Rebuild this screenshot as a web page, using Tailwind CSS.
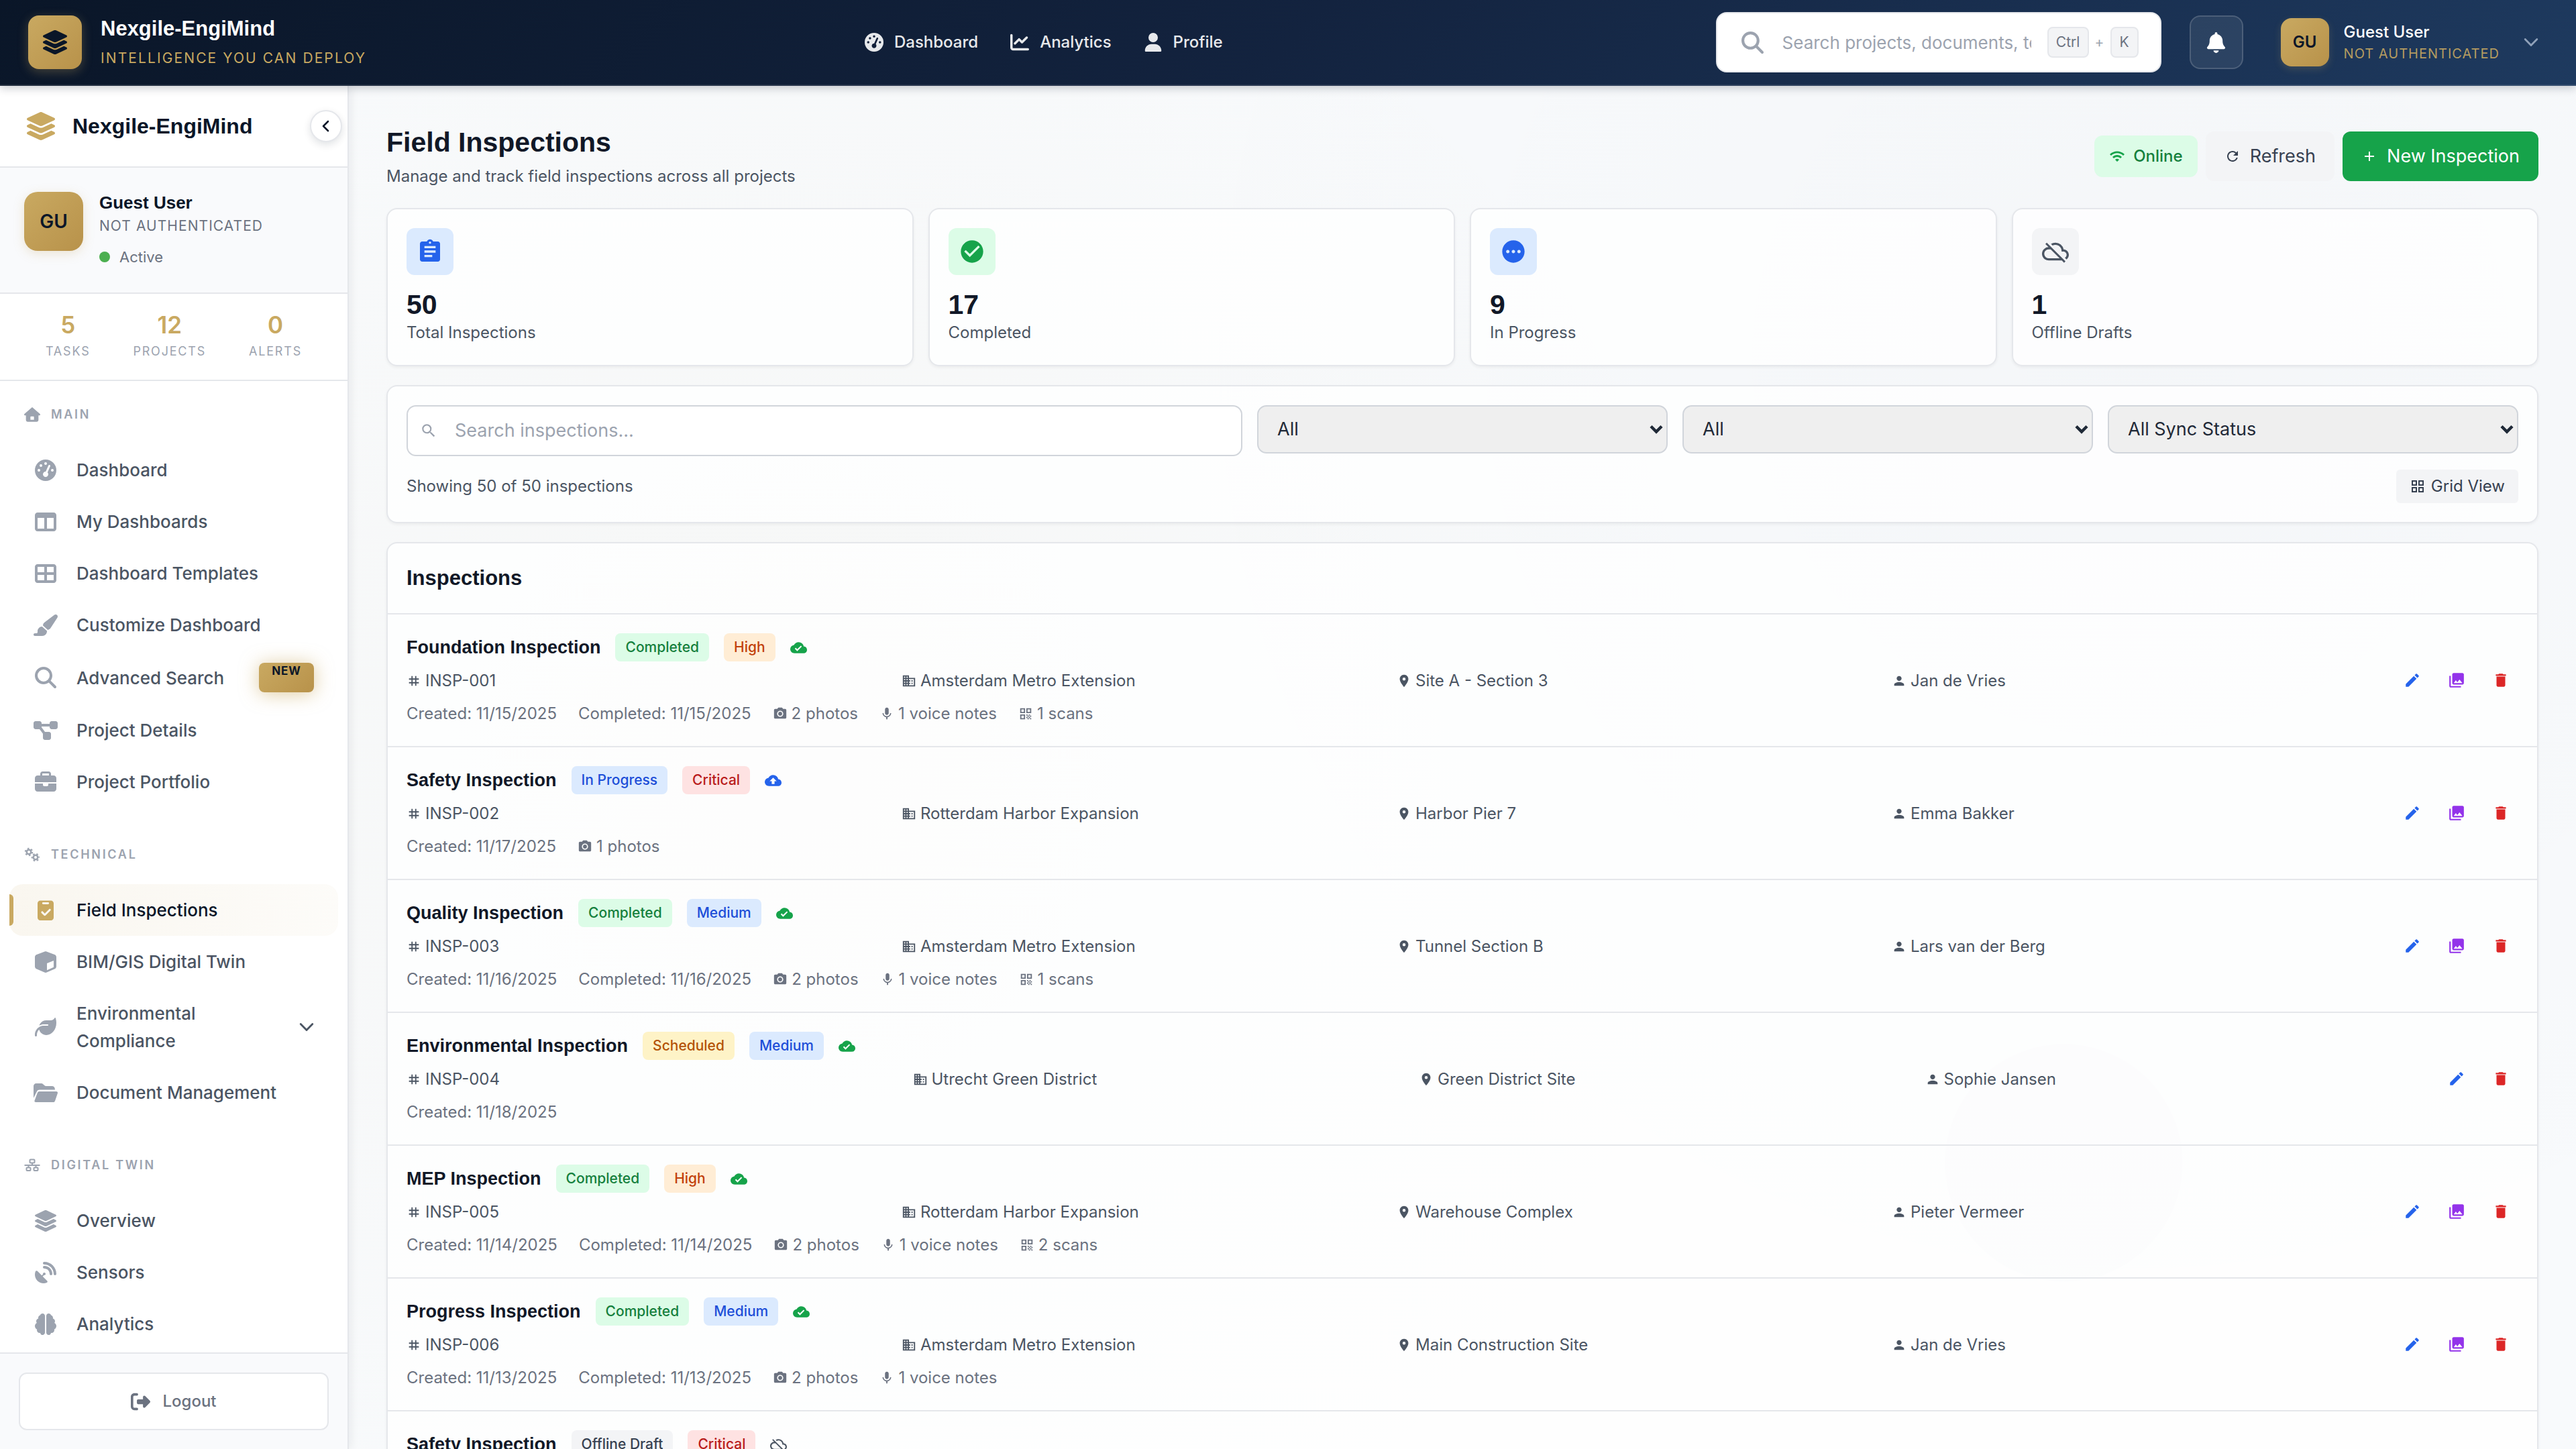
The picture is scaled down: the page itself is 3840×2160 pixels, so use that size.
<!DOCTYPE html>
<html lang="en">
<head>
<meta charset="utf-8">
<title>Nexgile-EngiMind – Field Inspections</title>
<script src="https://cdn.jsdelivr.net/npm/@tailwindcss/browser@4"></script>
</head>
<body class="flex h-screen flex-col overflow-hidden bg-[#f8fafc] font-[Inter,sans-serif] text-[24px] text-[#4b5563]">

<!-- Icon sprite -->
<svg class="hidden" aria-hidden="true">
  <symbol id="layers" viewBox="32 0 512 512"><path d="M264.500 5.200c14.900-6.900 32.100-6.900 47 0l218.600 101c8.500 3.900 13.900 12.400 13.900 21.800s-5.400 17.900-13.900 21.800l-218.600 101c-14.900 6.900-32.100 6.900-47 0L45.900 149.800C37.400 145.800 32 137.300 32 128s5.400-17.900 13.900-21.800L264.500 5.200zM476.900 209.600l53.200 24.600c8.500 3.900 13.900 12.400 13.900 21.800s-5.400 17.900-13.900 21.800l-218.600 101c-14.900 6.900-32.100 6.900-47 0L45.900 277.800C37.400 273.800 32 265.300 32 256s5.400-17.900 13.900-21.800l53.200-24.600 152 70.200c23.400 10.800 50.400 10.800 73.800 0l152-70.200zm-152 198.200l152-70.200 53.200 24.600c8.500 3.900 13.900 12.400 13.900 21.800s-5.400 17.900-13.900 21.800l-218.600 101c-14.900 6.900-32.100 6.900-47 0L45.900 405.800C37.400 401.800 32 393.300 32 384s5.400-17.900 13.900-21.800l53.200-24.600 152 70.200c23.400 10.800 50.400 10.800 73.800 0z"/></symbol>
  <symbol id="gauge" viewBox="0 0 512 512"><path fill-rule="evenodd" d="M0 256a256 256 0 1 1 512 0A256 256 0 1 1 0 256zM288 96a32 32 0 1 0-64 0 32 32 0 1 0 64 0zM256 416c35.300 0 64-28.700 64-64 0-17.400-6.900-33.100-18.100-44.600L366 161.700c5.300-12.100-.2-26.300-12.300-31.600s-26.300 .2-31.600 12.300L257.900 288H256c-35.300 0-64 28.700-64 64s28.700 64 64 64zM176 144a32 32 0 1 0-64 0 32 32 0 1 0 64 0zM96 288a32 32 0 1 0 0-64 32 32 0 1 0 0 64zm352-32a32 32 0 1 0-64 0 32 32 0 1 0 64 0z"/></symbol>
  <symbol id="chart" viewBox="0 0 512 512"><path d="M64 64c0-17.700-14.300-32-32-32S0 46.300 0 64V400c0 44.200 35.800 80 80 80H480c17.700 0 32-14.300 32-32s-14.300-32-32-32H80c-8.800 0-16-7.200-16-16V64zm406.600 86.600c12.500-12.500 12.500-32.800 0-45.300s-32.800-12.500-45.300 0L320 210.700l-57.400-57.400c-12.500-12.500-32.800-12.500-45.300 0l-112 112c-12.500 12.500-12.500 32.800 0 45.300s32.800 12.500 45.300 0L240 221.300l57.400 57.400c12.500 12.500 32.800 12.500 45.300 0l128-128z"/></symbol>
  <symbol id="user" viewBox="0 0 448 512"><path d="M224 256A128 128 0 1 0 224 0a128 128 0 1 0 0 256zm-45.700 48C79.800 304 0 383.800 0 482.300C0 498.700 13.300 512 29.700 512H418.300c16.400 0 29.700-13.300 29.700-29.700C448 383.800 368.200 304 269.700 304H178.300z"/></symbol>
  <symbol id="search" viewBox="0 0 512 512"><path d="M416 208c0 45.900-14.900 88.300-40 122.700L502.600 457.400c12.500 12.500 12.500 32.800 0 45.300s-32.800 12.500-45.300 0L330.700 376c-34.400 25.200-76.800 40-122.700 40C93.100 416 0 322.900 0 208S93.100 0 208 0S416 93.100 416 208zM208 352a144 144 0 1 0 0-288 144 144 0 1 0 0 288z"/></symbol>
  <symbol id="bell" viewBox="0 0 448 512"><path d="M224 0c-17.700 0-32 14.300-32 32V51.200C119 66 64 130.600 64 208v18.800c0 47-17.300 92.400-48.500 127.600l-7.400 8.300c-8.400 9.400-10.400 22.900-5.300 34.400S19.400 416 32 416H416c12.600 0 24-7.400 29.200-18.900s3.100-25-5.300-34.400l-7.400-8.300C401.300 319.200 384 273.900 384 226.800V208c0-77.400-55-142-128-156.800V32c0-17.700-14.300-32-32-32zm45.300 493.300c12-12 18.700-28.300 18.700-45.300H160c0 17 6.700 33.300 18.700 45.300s28.300 18.700 45.300 18.700s33.300-6.700 45.300-18.700z"/></symbol>
  <symbol id="chev-down" viewBox="0 0 20 20"><path d="M2 6l8 8 8-8" fill="none" stroke="currentColor" stroke-width="2.600" stroke-linecap="round" stroke-linejoin="round"/></symbol>
  <symbol id="chev-left" viewBox="0 0 20 20"><path d="M13 3l-7 7 7 7" fill="none" stroke="currentColor" stroke-width="2.600" stroke-linecap="round" stroke-linejoin="round"/></symbol>
  <symbol id="select-arrow" viewBox="0 0 20 20"><path d="M2 5.500l8 8 8-8" fill="none" stroke="currentColor" stroke-width="4.500"/></symbol>
  <symbol id="home" viewBox="0 0 576 512"><path fill-rule="evenodd" d="M575.800 255.500c0 18-15 32.100-32 32.100h-32l.7 160.200c0 35.300-28.700 64-64 64H128c-35.300 0-64-28.700-64-64V287.600H32c-18 0-32-14-32-32.100c0-9 3-17 10-24L266.400 8c7-7 15-8 22-8s15 2 21 7L564.800 231.500c8 7 12 15 11 24zM248 320c-13 0-24 11-24 24v96h128v-96c0-13-11-24-24-24z"/></symbol>
  <symbol id="columns" viewBox="0 0 512 512"><path d="M0 96C0 60.700 28.700 32 64 32H448c35.300 0 64 28.700 64 64V416c0 35.300-28.700 64-64 64H64c-35.300 0-64-28.700-64-64V96zm64 64V416H224V160H64zm384 0H288V416H448V160z"/></symbol>
  <symbol id="cells" viewBox="0 0 512 512"><path d="M448 96V224H288V96H448zm0 192V416H288V288H448zM224 224H64V96H224V224zM64 288H224V416H64V288zM64 32C28.700 32 0 60.700 0 96V416c0 35.300 28.700 64 64 64H448c35.300 0 64-28.700 64-64V96c0-35.300-28.700-64-64-64H64z"/></symbol>
  <symbol id="brush" viewBox="0 0 576 512"><path d="M339.300 367.100c27.300-3.900 51.900-19.400 67.200-42.900L568.200 74.100c12.600-19.500 9.400-45.300-7.600-61.200S517.700-4.400 499.100 9.600L262.400 187.200c-24 18-38.200 46.100-38.400 76.100L339.300 367.100zm-19.600 25.400l-116-104.400C143.900 290.300 96 339.600 96 400c0 3.900 .2 7.800 .6 11.600C98.400 429.100 86.400 448 68.800 448H32c-17.700 0-32 14.300-32 32s14.300 32 32 32H208c61.900 0 112-50.100 112-112c0-2.500-.1-5-.2-7.500z"/></symbol>
  <symbol id="project" viewBox="0 0 576 512"><path d="M0 80C0 53.500 21.500 32 48 32h96c26.500 0 48 21.500 48 48V96H384V80c0-26.500 21.500-48 48-48h96c26.500 0 48 21.500 48 48v96c0 26.500-21.500 48-48 48H432c-26.500 0-48-21.500-48-48V160H192v16c0 1.700-.1 3.400-.3 5L272 288h96c26.500 0 48 21.500 48 48v96c0 26.500-21.500 48-48 48H272c-26.500 0-48-21.500-48-48V336c0-1.700 .1-3.400 .3-5L144 224H48c-26.500 0-48-21.500-48-48V80z"/></symbol>
  <symbol id="briefcase" viewBox="0 0 512 512"><path d="M184 48H328c4.400 0 8 3.600 8 8V96H176V56c0-4.400 3.600-8 8-8zm-56 8V96H64C28.700 96 0 124.700 0 160v96H512V160c0-35.300-28.700-64-64-64H384V56c0-30.900-25.100-56-56-56H184c-30.900 0-56 25.100-56 56zM512 288H320v32c0 17.700-14.300 32-32 32H224c-17.700 0-32-14.300-32-32V288H0V416c0 35.300 28.700 64 64 64H448c35.300 0 64-28.700 64-64V288z"/></symbol>
  <symbol id="gears" viewBox="0 0 48 40"><g fill="none" stroke="currentColor"><circle cx="14" cy="12" r="6.500" stroke-width="5"/><circle cx="14" cy="12" r="10.500" stroke-width="4" stroke-dasharray="5 5.996" /><circle cx="34" cy="28" r="6.500" stroke-width="5"/><circle cx="34" cy="28" r="10.500" stroke-width="4" stroke-dasharray="5 5.996" stroke-dashoffset="4"/></g></symbol>
  <symbol id="clipboard" viewBox="0 0 384 512"><path fill-rule="evenodd" d="M64 24h256c35 0 64 29 64 64v344c0 35-29 64-64 64H64c-35 0-64-29-64-64V88c0-35 29-64 64-64zm68 40c-13 0-22 10-22 23s9 23 22 23h120c13 0 22-10 22-23s-9-23-22-23zM276 226L172 330l-46-46c-22-22-54 12-34 34l62 62c10 10 26 10 36 0l120-120c22-22-12-56-34-34z"/></symbol>
  <symbol id="cube" viewBox="0 0 512 512"><path fill-rule="evenodd" d="M234 8c14-6 30-6 44 0l192 72c25 9 42 33 42 60v224c0 24-14 46-35 57L283 505c-17 9-37 9-54 0L35 421C14 410 0 388 0 364V140c0-27 17-51 42-60zM288 286v164l160-72V222z"/></symbol>
  <symbol id="leaf" viewBox="0 0 512 512"><path d="M272 96c-78.600 0-145.100 51.500-167.700 122.500c33.600-17 71.500-26.500 111.700-26.500h88c8.800 0 16 7.200 16 16s-7.200 16-16 16H216c-16.600 0-32.700 1.900-48.200 5.400c-25.900 5.900-50 16.400-71.400 30.700C38.300 298.800 0 364.900 0 440v16c0 13.300 10.700 24 24 24s24-10.700 24-24V440c0-48.700 20.700-92.500 53.800-123.200C121.600 392.300 190.300 448 272 448l1 0c132.100-.7 239-130.900 239-291.400c0-42.600-7.500-83.100-21.100-119.600c-2.600-6.900-12.700-6.600-16.200-.1C455.900 72.100 418.700 96 376 96L272 96z"/></symbol>
  <symbol id="folder" viewBox="0 0 576 512"><path d="M0 96c0-35 29-64 64-64h120c17 0 33 7 45 19l27 26c12 12 28 19 45 19h135c45 0 74 29 74 74v14H144c-25 0-52 13-64 38L0 380z"/><path d="M470 480H52c-22 0-36-18-28-38l68-184c8-20 26-34 48-34h404c22 0 38 20 30 42l-58 172c-8 26-24 42-46 42z"/></symbol>
  <symbol id="network" viewBox="0 0 48 40"><g fill="none" stroke="currentColor" stroke-width="4"><rect x="17" y="3" width="14" height="10" rx="2"/><rect x="7" y="27" width="12" height="9" rx="2"/><rect x="29" y="27" width="12" height="9" rx="2"/><path d="M1 20h46M24 13v7M13 20v7M35 20v7"/></g></symbol>
  <symbol id="dish" viewBox="0 0 512 512"><path d="M192 32c0-17.700 14.300-32 32-32C383.100 0 512 128.900 512 288c0 17.700-14.300 32-32 32s-32-14.300-32-32C448 164.300 347.700 64 224 64c-17.700 0-32-14.300-32-32zM60.600 220.600L164.700 324.700l28.400-28.400c-.7-2.600-1.100-5.400-1.100-8.300c0-17.700 14.300-32 32-32s32 14.300 32 32s-14.300 32-32 32c-2.900 0-5.600-.4-8.300-1.100l-28.400 28.400L291.400 451.400c14.500 14.500 11.800 38.800-7.300 46.300C260.500 506.900 234.900 512 208 512C93.100 512 0 418.900 0 304c0-26.900 5.100-52.500 14.400-76.100c7.500-19 31.800-21.800 46.300-7.300zM224 96c106 0 192 86 192 192c0 17.700-14.300 32-32 32s-32-14.300-32-32c0-70.700-57.300-128-128-128c-17.700 0-32-14.300-32-32s14.300-32 32-32z"/></symbol>
  <symbol id="brain" viewBox="0 0 512 512"><path d="M184 0c31 0 56 25 56 56v400c0 31-25 56-56 56-29 0-53-22-56-50-5 1-10 2-16 2-35 0-64-29-64-64 0-7 1-15 4-21C21 367 0 336 0 300c0-33 19-62 47-76-9-11-15-26-15-42 0-31 22-57 51-63-2-5-3-11-3-17 0-30 21-55 48-62 3-23 27-40 56-40z"/><path transform="matrix(-1 0 0 1 512 0)" d="M184 0c31 0 56 25 56 56v400c0 31-25 56-56 56-29 0-53-22-56-50-5 1-10 2-16 2-35 0-64-29-64-64 0-7 1-15 4-21C21 367 0 336 0 300c0-33 19-62 47-76-9-11-15-26-15-42 0-31 22-57 51-63-2-5-3-11-3-17 0-30 21-55 48-62 3-23 27-40 56-40z"/></symbol>
  <symbol id="logout" viewBox="0 0 512 512"><path d="M377.900 105.900L500.700 228.700c7.200 7.200 11.300 17.100 11.300 27.300s-4.100 20.100-11.300 27.300L377.900 406.100c-6.400 6.400-15 9.900-24 9.900c-18.700 0-33.900-15.200-33.900-33.900l0-62.100-128 0c-17.700 0-32-14.300-32-32l0-64c0-17.700 14.300-32 32-32l128 0 0-62.100c0-18.700 15.200-33.900 33.900-33.900c9 0 17.600 3.600 24 9.900zM160 96L96 96c-17.700 0-32 14.300-32 32l0 256c0 17.700 14.300 32 32 32l64 0c17.700 0 32 14.300 32 32s-14.300 32-32 32l-64 0c-53 0-96-43-96-96L0 128C0 75 43 32 96 32l64 0c17.700 0 32 14.300 32 32s-14.300 32-32 32z"/></symbol>
  <symbol id="assignment" viewBox="0 0 24 24"><path d="M19 3h-4.180C14.400 1.840 13.300 1 12 1c-1.300 0-2.400.84-2.820 2H5c-1.100 0-2 .9-2 2v14c0 1.100.9 2 2 2h14c1.100 0 2-.9 2-2V5c0-1.100-.9-2-2-2zm-7 0c.55 0 1 .45 1 1s-.45 1-1 1-1-.45-1-1 .45-1 1-1zm2 14H7v-2h7v2zm3-4H7v-2h10v2zm0-4H7V7h10v2z"/></symbol>
  <symbol id="check" viewBox="0 0 24 24"><path d="M12 2C6.480 2 2 6.480 2 12s4.480 10 10 10 10-4.480 10-10S17.520 2 12 2zm-2 15l-5-5 1.410-1.410L10 14.170l7.590-7.590L19 8l-9 9z"/></symbol>
  <symbol id="pending" viewBox="0 0 24 24"><path d="M12 2C6.480 2 2 6.480 2 12s4.480 10 10 10 10-4.480 10-10S17.520 2 12 2zM7 13.500c-.83 0-1.500-.67-1.500-1.500s.67-1.500 1.500-1.500 1.500.67 1.500 1.500-.67 1.500-1.500 1.500zm5 0c-.83 0-1.500-.67-1.500-1.500s.67-1.500 1.500-1.500 1.500.67 1.500 1.500-.67 1.500-1.500 1.500zm5 0c-.83 0-1.500-.67-1.500-1.500s.67-1.500 1.500-1.500 1.500.67 1.500 1.500-.67 1.500-1.500 1.500z"/></symbol>
  <symbol id="cloud-off" viewBox="0 0 24 24"><path d="M19.350 10.040A7.490 7.490 0 0 0 12 4c-1.480 0-2.850.43-4.010 1.170l1.460 1.460C10.210 6.230 11.080 6 12 6c3.040 0 5.500 2.460 5.500 5.500v.5H19c1.660 0 3 1.340 3 3 0 1.130-.64 2.110-1.560 2.620l1.450 1.450C23.160 18.160 24 16.680 24 15c0-2.640-2.050-4.780-4.650-4.960zM3 5.270l2.750 2.740C2.560 8.150 0 10.770 0 14c0 3.310 2.690 6 6 6h11.730l2 2L21 20.730 4.270 4 3 5.270zM7.730 10l8 8H6c-2.210 0-4-1.790-4-4s1.790-4 4-4h1.730z"/></symbol>
  <symbol id="cloud-done" viewBox="0 0 24 24"><path d="M19.350 10.040A7.490 7.490 0 0 0 12 4C9.110 4 6.600 5.640 5.350 8.040A5.994 5.994 0 0 0 0 14c0 3.310 2.690 6 6 6h13c2.760 0 5-2.240 5-5 0-2.640-2.050-4.780-4.650-4.960zM10 17l-3.500-3.500 1.410-1.410L10 14.170 15.180 9l1.410 1.410L10 17z"/></symbol>
  <symbol id="cloud-up" viewBox="0 0 24 24"><path d="M19.350 10.040A7.490 7.490 0 0 0 12 4C9.110 4 6.600 5.640 5.350 8.040A5.994 5.994 0 0 0 0 14c0 3.310 2.690 6 6 6h13c2.760 0 5-2.240 5-5 0-2.640-2.050-4.780-4.650-4.960zM14 13v4h-4v-4H7l5-5 5 5h-3z"/></symbol>
  <symbol id="wifi" viewBox="0 0 24 24"><path d="M1 9l2 2c4.970-4.970 13.030-4.970 18 0l2-2C16.930 2.930 7.080 2.930 1 9zm8 8l3 3 3-3c-1.650-1.660-4.340-1.660-6 0zm-4-4l2 2c2.760-2.760 7.240-2.760 10 0l2-2C15.140 9.140 8.870 9.140 5 13z"/></symbol>
  <symbol id="refresh" viewBox="0 0 24 24"><path d="M17.650 6.350A7.958 7.958 0 0 0 12 4c-4.420 0-7.990 3.580-7.990 8s3.570 8 7.990 8c3.730 0 6.840-2.550 7.730-6h-2.080A5.990 5.990 0 0 1 12 18c-3.310 0-6-2.690-6-6s2.690-6 6-6c1.660 0 3.140.69 4.220 1.780L13 11h7V4l-2.350 2.350z"/></symbol>
  <symbol id="plus" viewBox="0 0 24 24"><path d="M19 13h-6v6h-2v-6H5v-2h6V5h2v6h6v2z"/></symbol>
  <symbol id="find" viewBox="0 0 24 24"><path d="M15.500 14h-.79l-.28-.27A6.471 6.471 0 0 0 16 9.500 6.500 6.500 0 1 0 9.500 16c1.610 0 3.090-.59 4.230-1.570l.27.28v.79l5 4.990L20.490 19l-4.990-5zm-6 0C7.010 14 5 11.990 5 9.500S7.010 5 9.500 5 14 7.010 14 9.500 11.990 14 9.500 14z"/></symbol>
  <symbol id="grid" viewBox="0 0 24 24"><path d="M3 3v8h8V3H3zm6 6H5V5h4v4zm-6 4v8h8v-8H3zm6 6H5v-4h4v4zm4-16v8h8V3h-8zm6 6h-4V5h4v4zm-6 4v8h8v-8h-8zm6 6h-4v-4h4v4z"/></symbol>
  <symbol id="hash" viewBox="0 0 24 24"><path d="M20 10V8h-4V4h-2v4h-4V4H8v4H4v2h4v4H4v2h4v4h2v-4h4v4h2v-4h4v-2h-4v-4h4zm-6 4h-4v-4h4v4z"/></symbol>
  <symbol id="building" viewBox="0 0 24 24"><path d="M12 7V3H2v18h20V7H12zM6 19H4v-2h2v2zm0-4H4v-2h2v2zm0-4H4V9h2v2zm0-4H4V5h2v2zm4 12H8v-2h2v2zm0-4H8v-2h2v2zm0-4H8V9h2v2zm0-4H8V5h2v2zm10 12h-8v-2h2v-2h-2v-2h2v-2h-2V9h8v10zm-2-8h-2v2h2v-2zm0 4h-2v2h2v-2z"/></symbol>
  <symbol id="pin" viewBox="0 0 24 24"><path d="M12 2C8.130 2 5 5.130 5 9c0 5.250 7 13 7 13s7-7.750 7-13c0-3.870-3.130-7-7-7zm0 9.500a2.500 2.500 0 0 1 0-5 2.500 2.500 0 0 1 0 5z"/></symbol>
  <symbol id="person" viewBox="0 0 24 24"><path d="M12 12c2.210 0 4-1.790 4-4s-1.790-4-4-4-4 1.790-4 4 1.790 4 4 4zm0 2c-2.670 0-8 1.340-8 4v2h16v-2c0-2.660-5.330-4-8-4z"/></symbol>
  <symbol id="camera" viewBox="0 0 24 24"><circle cx="12" cy="12" r="3.200"/><path d="M9 2L7.170 4H4c-1.100 0-2 .9-2 2v12c0 1.100.9 2 2 2h16c1.100 0 2-.9 2-2V6c0-1.100-.9-2-2-2h-3.170L15 2H9zm3 15c-2.760 0-5-2.240-5-5s2.240-5 5-5 5 2.240 5 5-2.240 5-5 5z"/></symbol>
  <symbol id="mic" viewBox="0 0 24 24"><path d="M12 14c1.660 0 2.990-1.340 2.990-3L15 5c0-1.660-1.340-3-3-3S9 3.340 9 5v6c0 1.660 1.340 3 3 3zm5.300-3c0 3-2.540 5.100-5.300 5.100S6.700 14 6.700 11H5c0 3.410 2.720 6.230 6 6.720V21h2v-3.280c3.280-.48 6-3.300 6-6.720h-1.700z"/></symbol>
  <symbol id="qr" viewBox="0 0 24 24"><path d="M3 11h8V3H3v8zm2-6h4v4H5V5zM3 21h8v-8H3v8zm2-6h4v4H5v-4zM13 3v8h8V3h-8zm6 6h-4V5h4v4zM19 19h2v2h-2zM13 13h2v2h-2zM15 15h2v2h-2zM13 17h2v2h-2zM15 19h2v2h-2zM17 17h2v2h-2zM17 13h2v2h-2zM19 15h2v2h-2z"/></symbol>
  <symbol id="edit" viewBox="0 0 24 24"><path d="M3 17.250V21h3.750L17.810 9.940l-3.750-3.750L3 17.250zM20.710 7.040a.996.996 0 0 0 0-1.410l-2.340-2.340a.996.996 0 0 0-1.410 0l-1.830 1.830 3.750 3.750 1.830-1.830z"/></symbol>
  <symbol id="gallery" viewBox="0 0 24 24"><path d="M22 16V4c0-1.100-.9-2-2-2H8c-1.100 0-2 .9-2 2v12c0 1.100.9 2 2 2h12c1.100 0 2-.9 2-2zm-11-4l2.030 2.710L16 11l4 5H8l3-4zM2 6v14c0 1.100.9 2 2 2h14v-2H4V6H2z"/></symbol>
  <symbol id="trash" viewBox="0 0 24 24"><path d="M6 19c0 1.100.9 2 2 2h8c1.100 0 2-.9 2-2V7H6v12zM19 4h-3.500l-1-1h-5l-1 1H5v2h14V4z"/></symbol>
</svg>

<header class="relative z-20 flex shrink-0 items-center justify-between border-b-2 border-white/10 bg-linear-135 from-[#0a1628] via-[#13233f] to-[#1e3a5f] bg-origin-border px-[42px] py-[18px] text-white shadow-[0_4px_12px_rgba(10,22,40,0.2)]">
  <div class="flex items-center gap-7 pr-2">
    <div class="flex size-20 items-center justify-center rounded-2xl bg-linear-135 from-[#c9a961] to-[#b8924a] text-[#0a1628] shadow-[0_4px_16px_rgba(201,169,97,0.3)]"><svg class="size-9 fill-current"><use href="#layers"/></svg></div>
    <div>
      <div class="font-['Liberation_Sans',sans-serif] text-[31px] leading-[48px] font-bold">Nexgile-EngiMind</div>
      <div class="text-[21px] leading-10 tracking-widest text-[#c9a961]">INTELLIGENCE YOU CAN DEPLOY</div>
    </div>
  </div>
  <nav aria-label="Primary" class="flex gap-12 text-[24px] font-medium text-white/90">
    <a href="#dashboard" class="flex items-center gap-4"><svg class="size-7 fill-current"><use href="#gauge"/></svg>Dashboard</a>
    <a href="#analytics" class="flex items-center gap-4"><svg class="size-7 fill-current"><use href="#chart"/></svg>Analytics</a>
    <a href="#profile" class="flex items-center gap-4"><svg class="size-7 fill-current"><use href="#user"/></svg>Profile</a>
  </nav>
  <div class="flex items-center">
    <label class="flex h-[90px] w-[664px] items-center rounded-2xl border-2 border-[#e5e7eb] bg-white pr-8 pl-9">
      <svg class="size-[33px] shrink-0 fill-[#9ca3af]"><use href="#search"/></svg>
      <input type="text" aria-label="Search" placeholder="Search projects, documents, team members..." class="ml-7 w-0 min-w-0 flex-1 bg-transparent text-[26px] text-[#374151] outline-none placeholder:text-[#9ca3af]">
      <kbd class="ml-6 flex h-[46px] w-[62px] items-center justify-center rounded-lg border-2 border-[#e5e7eb] bg-[#f3f4f6] font-[Inter,sans-serif] text-[21px] text-[#6b7280]">Ctrl</kbd>
      <span class="w-8 text-center text-[21px] text-[#9ca3af]">+</span>
      <kbd class="flex h-[46px] w-[42px] items-center justify-center rounded-lg border-2 border-[#e5e7eb] bg-[#f3f4f6] font-[Inter,sans-serif] text-[21px] text-[#6b7280]">K</kbd>
    </label>
    <button type="button" aria-label="Notifications" class="ml-[42px] flex size-20 items-center justify-center rounded-2xl border-2 border-white/15 bg-white/8"><svg class="size-[31px] fill-white"><use href="#bell"/></svg></button>
    <button type="button" class="ml-[56px] flex items-center text-left">
      <span class="flex size-[72px] items-center justify-center rounded-2xl bg-linear-135 from-[#c9a961] to-[#b8924a] text-[24px] font-semibold text-[#0a1628] shadow-[0_4px_12px_rgba(201,169,97,0.2)]">GU</span>
      <span class="ml-[22px] flex flex-col">
        <span class="text-[24px] leading-[34px] font-medium">Guest User</span>
        <span class="text-[20px] leading-[30px] tracking-wider text-[#c9a961]/90">NOT AUTHENTICATED</span>
      </span>
      <svg class="mr-[14px] ml-9 size-[22px] text-slate-400"><use href="#chev-down"/></svg>
    </button>
  </div>
</header>

<div class="flex min-h-0 flex-1">
  <aside class="relative z-10 flex w-[520px] shrink-0 flex-col border-r-2 border-[#e5e7eb] bg-white shadow-[4px_0_12px_rgba(10,22,40,0.06)]">
    <div class="relative flex items-center gap-[26px] border-b-2 border-[#e5e7eb] px-10 py-9">
      <svg class="size-[42px] fill-[#c9a961]"><use href="#layers"/></svg>
      <span class="font-['Liberation_Sans',sans-serif] text-[32px] leading-[48px] font-bold text-[#0a1628]">Nexgile-EngiMind</span>
      <button type="button" aria-label="Collapse sidebar" class="absolute right-2 flex size-12 items-center justify-center rounded-full border-2 border-[#e5e7eb] bg-white text-[#0a1628] shadow-[0_4px_12px_rgba(10,22,40,0.12)]"><svg class="size-[20px]"><use href="#chev-left"/></svg></button>
    </div>

    <div class="flex items-start gap-6 border-b-2 border-[#e5e7eb] bg-[#f9fafc] p-9">
      <div class="flex size-[88px] items-center justify-center rounded-[20px] bg-linear-135 from-[#c9a961] to-[#b8924a] text-[28px] font-semibold text-[#0a1628] shadow-[0_4px_16px_rgba(201,169,97,0.25)]">GU</div>
      <div>
        <div class="font-['Liberation_Sans',sans-serif] text-[26px] leading-8 font-bold text-[#0a1628]">Guest User</div>
        <div class="mt-[2px] text-[21px] leading-[34px] tracking-wider text-[#6b7280]">NOT AUTHENTICATED</div>
        <div class="mt-3 flex items-center gap-[14px] text-[22px] leading-[34px] text-[#6b7280]"><span class="size-4 rounded-full bg-[#4caf50]"></span>Active</div>
      </div>
    </div>

    <div class="flex justify-around border-b-2 border-[#e5e7eb] px-9 py-7 text-center">
      <div><div class="text-[35px] leading-9 font-semibold text-[#c9a961]">5</div><div class="mt-[7px] text-[18px] leading-[29px] tracking-widest text-[#9ca3af]">TASKS</div></div>
      <div><div class="text-[35px] leading-9 font-semibold text-[#c9a961]">12</div><div class="mt-[7px] text-[18px] leading-[29px] tracking-widest text-[#9ca3af]">PROJECTS</div></div>
      <div><div class="text-[35px] leading-9 font-semibold text-[#c9a961]">0</div><div class="mt-[7px] text-[18px] leading-[29px] tracking-widest text-[#9ca3af]">ALERTS</div></div>
    </div>

    <nav aria-label="Sidebar" class="min-h-0 flex-1 overflow-hidden px-[14px] pt-9 text-[26px] leading-[41px] font-medium">
      <h2 class="mb-[30px] flex items-center gap-4 px-[22px] text-[18px] leading-7 font-semibold tracking-[0.15em] text-[#9ca3af]"><svg class="size-6 fill-current"><use href="#home"/></svg>MAIN</h2>
      <a href="#dashboard" class="flex items-center gap-7 px-9 py-[18px]"><svg class="h-8 w-9 fill-[#9ca3af]"><use href="#gauge"/></svg>Dashboard</a>
      <a href="#my-dashboards" class="flex items-center gap-7 px-9 py-[18px]"><svg class="h-8 w-9 fill-[#9ca3af]"><use href="#columns"/></svg>My Dashboards</a>
      <a href="#templates" class="flex items-center gap-7 px-9 py-[18px]"><svg class="h-8 w-9 fill-[#9ca3af]"><use href="#cells"/></svg>Dashboard Templates</a>
      <a href="#customize" class="flex items-center gap-7 px-9 py-[18px]"><svg class="h-8 w-9 fill-[#9ca3af]"><use href="#brush"/></svg>Customize Dashboard</a>
      <a href="#search" class="flex items-center gap-7 px-9 py-[18px]"><svg class="h-8 w-9 fill-[#9ca3af]"><use href="#search"/></svg><span class="flex-1">Advanced Search</span><span class="h-11 w-[82px] rounded-lg bg-linear-135 from-[#c9a961] to-[#b8924a] text-center text-[17px] leading-6 font-bold tracking-wider text-[#0a1628] shadow-[0_2px_28px_rgba(201,169,97,0.6)]">NEW</span></a>
      <a href="#details" class="flex items-center gap-7 px-9 py-[18px]"><svg class="h-8 w-9 fill-[#9ca3af]"><use href="#project"/></svg>Project Details</a>
      <a href="#portfolio" class="flex items-center gap-7 px-9 py-[18px]"><svg class="h-8 w-9 fill-[#9ca3af]"><use href="#briefcase"/></svg>Project Portfolio</a>

      <h2 class="mt-14 mb-[30px] flex items-center gap-4 px-[22px] text-[18px] leading-7 font-semibold tracking-[0.15em] text-[#9ca3af]"><svg class="size-6 fill-current"><use href="#gears"/></svg>TECHNICAL</h2>
      <a href="#inspections" aria-current="page" class="relative flex items-center gap-7 rounded-[20px] bg-linear-to-r from-[#c9a961]/10 to-[#c9a961]/4 px-9 py-[18px] text-[#0a1628]"><span class="absolute inset-y-[15px] left-0 w-[6px] rounded-r-md bg-[#c9a961]"></span><svg class="h-8 w-9 fill-[#c9a961]"><use href="#clipboard"/></svg>Field Inspections</a>
      <a href="#bim" class="flex items-center gap-7 px-9 py-[18px]"><svg class="h-8 w-9 fill-[#9ca3af]"><use href="#cube"/></svg>BIM/GIS Digital Twin</a>
      <a href="#environment" class="flex items-center gap-7 px-9 py-[18px]"><svg class="h-8 w-9 shrink-0 fill-[#9ca3af]"><use href="#leaf"/></svg><span class="flex-1">Environmental<br>Compliance</span><svg class="size-[22px] shrink-0"><use href="#chev-down"/></svg></a>
      <a href="#documents" class="flex items-center gap-7 px-9 py-[18px]"><svg class="h-8 w-9 fill-[#9ca3af]"><use href="#folder"/></svg>Document Management</a>

      <h2 class="mt-14 mb-[30px] flex items-center gap-4 px-[22px] text-[18px] leading-7 font-semibold tracking-[0.15em] text-[#9ca3af]"><svg class="size-6 fill-current"><use href="#network"/></svg>DIGITAL TWIN</h2>
      <a href="#overview" class="flex items-center gap-7 px-9 py-[18px]"><svg class="h-8 w-9 fill-[#9ca3af]"><use href="#layers"/></svg>Overview</a>
      <a href="#sensors" class="flex items-center gap-7 px-9 py-[18px]"><svg class="h-8 w-9 fill-[#9ca3af]"><use href="#dish"/></svg>Sensors</a>
      <a href="#twin-analytics" class="flex items-center gap-7 px-9 py-[18px]"><svg class="h-8 w-9 fill-[#9ca3af]"><use href="#brain"/></svg>Analytics</a>
    </nav>

    <div class="border-t-2 border-[#e5e7eb] bg-[#f9fafc] p-7">
      <button type="button" class="flex h-[86px] w-full items-center justify-center gap-[18px] rounded-xl border-2 border-[#e5e7eb] bg-white text-[24px] font-medium text-[#6b7280]"><svg class="size-[29px] fill-current"><use href="#logout"/></svg>Logout</button>
    </div>
  </aside>

  <main class="min-w-0 flex-1 overflow-hidden bg-[radial-gradient(circle_at_77%_79%,rgba(10,22,40,0.03)_176px,transparent_178px),radial-gradient(circle_at_20%_50%,rgba(201,169,97,0.04),transparent_50%),radial-gradient(circle_at_80%_20%,rgba(10,22,40,0.015),transparent_50%)] p-14">
    <div class="flex items-center justify-between">
      <div>
        <h1 class="font-['Liberation_Sans',sans-serif] text-[41px] leading-[56px] font-bold text-[#111827]">Field Inspections</h1>
        <p class="mt-1 text-[24px] leading-[38px]">Manage and track field inspections across all projects</p>
      </div>
      <div class="flex items-center gap-3">
        <div class="flex h-[62px] items-center gap-3 rounded-xl bg-[#dcfce7] px-[22px] text-[24px] font-medium text-[#15803d]"><svg class="size-6 fill-[#16a34a]"><use href="#wifi"/></svg>Online</div>
        <button type="button" class="flex h-[74px] items-center gap-[14px] rounded-xl bg-[#f3f4f6] px-7 text-[27px] text-[#374151]"><svg class="size-6 fill-current"><use href="#refresh"/></svg>Refresh</button>
        <button type="button" class="flex h-[74px] items-center gap-[14px] rounded-xl bg-[#16a34a] px-7 text-[27px] text-white"><svg class="size-6 fill-current"><use href="#plus"/></svg>New Inspection</button>
      </div>
    </div>

    <section aria-label="Summary" class="mt-7 grid grid-cols-4 gap-[22px]">
      <div class="rounded-2xl border-2 border-[#e5e7eb] bg-white/80 px-7 pt-7 pb-[34px] shadow-[0_2px_4px_rgba(0,0,0,0.05)]">
        <div class="flex size-[70px] items-center justify-center rounded-xl bg-[#dbeafe]"><svg class="size-10 fill-[#2563eb]"><use href="#assignment"/></svg></div>
        <div class="mt-4 font-['Liberation_Sans',sans-serif] text-[41px] leading-[56px] font-bold text-[#111827]">50</div>
        <div class="text-[24px] leading-7">Total Inspections</div>
      </div>
      <div class="rounded-2xl border-2 border-[#e5e7eb] bg-white/80 px-7 pt-7 pb-[34px] shadow-[0_2px_4px_rgba(0,0,0,0.05)]">
        <div class="flex size-[70px] items-center justify-center rounded-xl bg-[#dcfce7]"><svg class="size-10 fill-[#16a34a]"><use href="#check"/></svg></div>
        <div class="mt-4 font-['Liberation_Sans',sans-serif] text-[41px] leading-[56px] font-bold text-[#111827]">17</div>
        <div class="text-[24px] leading-7">Completed</div>
      </div>
      <div class="rounded-2xl border-2 border-[#e5e7eb] bg-white/80 px-7 pt-7 pb-[34px] shadow-[0_2px_4px_rgba(0,0,0,0.05)]">
        <div class="flex size-[70px] items-center justify-center rounded-xl bg-[#dbeafe]"><svg class="size-10 fill-[#2563eb]"><use href="#pending"/></svg></div>
        <div class="mt-4 font-['Liberation_Sans',sans-serif] text-[41px] leading-[56px] font-bold text-[#111827]">9</div>
        <div class="text-[24px] leading-7">In Progress</div>
      </div>
      <div class="rounded-2xl border-2 border-[#e5e7eb] bg-white/80 px-7 pt-7 pb-[34px] shadow-[0_2px_4px_rgba(0,0,0,0.05)]">
        <div class="flex size-[70px] items-center justify-center rounded-xl bg-[#f3f4f6]"><svg class="size-10 fill-[#4b5563]"><use href="#cloud-off"/></svg></div>
        <div class="mt-4 font-['Liberation_Sans',sans-serif] text-[41px] leading-[56px] font-bold text-[#111827]">1</div>
        <div class="text-[24px] leading-7">Offline Drafts</div>
      </div>
    </section>

    <section aria-label="Filters" class="mt-7 rounded-2xl border-2 border-[#e5e7eb] bg-white/80 p-7 shadow-[0_2px_4px_rgba(0,0,0,0.05)]">
      <div class="grid grid-cols-5 items-start gap-[22px]">
        <label class="col-span-2 flex h-[76px] items-center gap-[26px] rounded-[14px] border-2 border-[#d1d5db] bg-white px-[18px]">
          <svg class="size-[26px] shrink-0 fill-[#9ca3af]"><use href="#find"/></svg>
          <input type="text" aria-label="Search inspections" placeholder="Search inspections..." class="min-w-0 flex-1 bg-transparent text-[27px] text-[#374151] outline-none placeholder:text-[#9ca3af]">
        </label>
        <div class="relative"><select aria-label="Status" class="h-[72px] w-full appearance-none rounded-[14px] border-2 border-[#d1d5db] bg-[#efefef] px-7 text-[27px] text-[#1f2937]"><option>All</option></select><svg class="pointer-events-none absolute top-[26px] right-[7px] size-5 text-[#1f2937]"><use href="#select-arrow"/></svg></div>
        <div class="relative"><select aria-label="Priority" class="h-[72px] w-full appearance-none rounded-[14px] border-2 border-[#d1d5db] bg-[#efefef] px-7 text-[27px] text-[#1f2937]"><option>All</option></select><svg class="pointer-events-none absolute top-[26px] right-[7px] size-5 text-[#1f2937]"><use href="#select-arrow"/></svg></div>
        <div class="relative"><select aria-label="Sync status" class="h-[72px] w-full appearance-none rounded-[14px] border-2 border-[#d1d5db] bg-[#efefef] px-7 text-[27px] text-[#1f2937]"><option>All Sync Status</option></select><svg class="pointer-events-none absolute top-[26px] right-[7px] size-5 text-[#1f2937]"><use href="#select-arrow"/></svg></div>
      </div>
      <div class="mt-5 flex items-center justify-between">
        <p class="text-[24px]">Showing 50 of 50 inspections</p>
        <button type="button" class="flex h-[50px] items-center gap-2 rounded-md bg-[#f3f4f6] px-5 text-[24px] text-[#374151]"><svg class="size-6 fill-current"><use href="#grid"/></svg>Grid View</button>
      </div>
    </section>

    <section class="mt-7 rounded-2xl border-2 border-[#e5e7eb] bg-white/80 shadow-[0_2px_4px_rgba(0,0,0,0.05)]">
      <h2 class="px-7 py-8 font-['Liberation_Sans',sans-serif] text-[31px] leading-10 font-bold text-[#111827]">Inspections</h2>
      <ul id="inspection-list"></ul>
    </section>
  </main>
</div>

<script>
const badgeStyles = {
  'Completed': 'bg-[#dcfce7] text-[#15803d]',
  'In Progress': 'bg-[#dbeafe] text-[#1d4ed8]',
  'Scheduled': 'bg-[#fef3c7] text-[#b45309]',
  'Offline Draft': 'bg-[#f3f4f6] text-[#374151]',
  'High': 'bg-[#ffedd5] text-[#c2410c]',
  'Medium': 'bg-[#dbeafe] text-[#1d4ed8]',
  'Critical': 'bg-[#fee2e2] text-[#b91c1c]',
};
const syncStyles = {
  'cloud-done': 'fill-[#16a34a]',
  'cloud-up': 'fill-[#2563eb]',
  'cloud-off': 'fill-[#4b5563]',
};
const inspections = [
  { title: 'Foundation Inspection', status: 'Completed', priority: 'High', sync: 'cloud-done', id: 'INSP-001', project: 'Amsterdam Metro Extension', place: 'Site A - Section 3', who: 'Jan de Vries', created: '11/15/2025', completed: '11/15/2025', photos: 2, notes: 1, scans: 1 },
  { title: 'Safety Inspection', status: 'In Progress', priority: 'Critical', sync: 'cloud-up', id: 'INSP-002', project: 'Rotterdam Harbor Expansion', place: 'Harbor Pier 7', who: 'Emma Bakker', created: '11/17/2025', photos: 1 },
  { title: 'Quality Inspection', status: 'Completed', priority: 'Medium', sync: 'cloud-done', id: 'INSP-003', project: 'Amsterdam Metro Extension', place: 'Tunnel Section B', who: 'Lars van der Berg', created: '11/16/2025', completed: '11/16/2025', photos: 2, notes: 1, scans: 1 },
  { title: 'Environmental Inspection', status: 'Scheduled', priority: 'Medium', sync: 'cloud-done', id: 'INSP-004', project: 'Utrecht Green District', place: 'Green District Site', who: 'Sophie Jansen', created: '11/18/2025' },
  { title: 'MEP Inspection', status: 'Completed', priority: 'High', sync: 'cloud-done', id: 'INSP-005', project: 'Rotterdam Harbor Expansion', place: 'Warehouse Complex', who: 'Pieter Vermeer', created: '11/14/2025', completed: '11/14/2025', photos: 2, notes: 1, scans: 2 },
  { title: 'Progress Inspection', status: 'Completed', priority: 'Medium', sync: 'cloud-done', id: 'INSP-006', project: 'Amsterdam Metro Extension', place: 'Main Construction Site', who: 'Jan de Vries', created: '11/13/2025', completed: '11/13/2025', photos: 2, notes: 1 },
  { title: 'Safety Inspection', status: 'Offline Draft', priority: 'Critical', sync: 'cloud-off', id: 'INSP-007', project: 'Utrecht Green District', place: 'Green District Site', who: 'Emma Bakker', created: '11/19/2025' },
];
const badge = t => `<span class="flex h-[42px] items-center rounded-lg px-[15px] text-[21px] font-medium ${badgeStyles[t]}">${t}</span>`;
const field = (icon, t) => `<div class="flex items-center gap-[6px]"><svg class="size-[22px] fill-current"><use href="#${icon}"/></svg>${t}</div>`;
const count = (icon, n, t) => n ? field(icon, `${n} ${t}`) : '';
const action = (icon, label, color) => `<button type="button" aria-label="${label}" class="flex size-[52px] items-center justify-center"><svg class="size-[26px] ${color}"><use href="#${icon}"/></svg></button>`;

document.getElementById('inspection-list').innerHTML = inspections.map(i => `
  <li class="flex items-center gap-7 border-t-2 border-[#e5e7eb] p-7">
    <div class="flex-1">
      <div class="flex items-center gap-[22px]">
        <h3 class="font-['Liberation_Sans',sans-serif] text-[27px] leading-[42px] font-bold text-[#111827]">${i.title}</h3>
        ${badge(i.status)}${badge(i.priority)}
        <svg class="size-[25px] ${syncStyles[i.sync]}"><use href="#${i.sync}"/></svg>
      </div>
      <div class="mt-2 grid grid-cols-4 gap-4 text-[24px] leading-[42px]">
        ${field('hash', i.id)}${field('building', i.project)}${field('pin', i.place)}${field('person', i.who)}
      </div>
      <div class="mt-2 flex gap-8 text-[24px] leading-10 text-[#6b7280]">
        <span>Created: ${i.created}</span>
        ${i.completed ? `<span>Completed: ${i.completed}</span>` : ''}
        ${count('camera', i.photos, 'photos')}${count('mic', i.notes, 'voice notes')}${count('qr', i.scans, 'scans')}
      </div>
    </div>
    <div class="flex gap-[14px]">
      ${action('edit', 'Edit', 'fill-[#2563eb]')}
      ${i.photos ? action('gallery', 'Photos', 'fill-[#9333ea]') : ''}
      ${action('trash', 'Delete', 'fill-[#dc2626]')}
    </div>
  </li>`).join('');
</script>
</body>
</html>
